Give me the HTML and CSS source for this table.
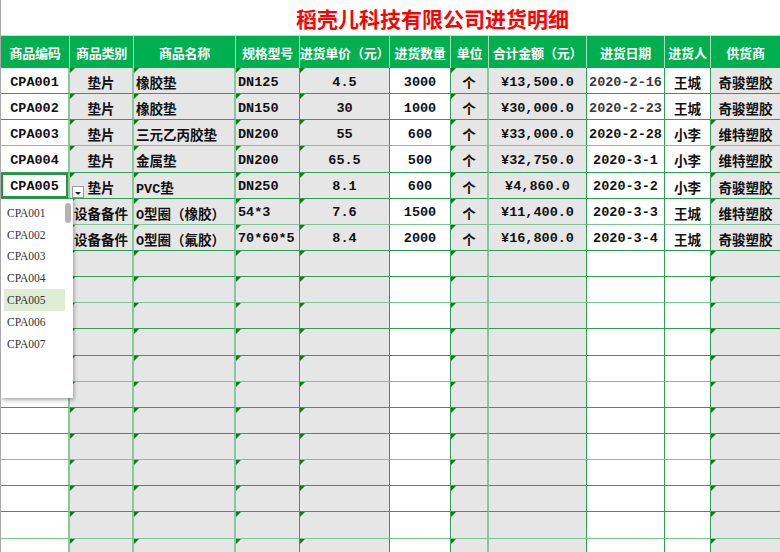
FILE: index.html
```html
<!DOCTYPE html>
<html lang="zh">
<head>
<meta charset="utf-8">
<link rel="stylesheet" href="styles.css">
</head>
<body>
<div class="sheet">
  <div class="title">稻壳儿科技有限公司进货明细</div>
  <div class="head row">
    <div>商品编码</div><div>商品类别</div><div>商品名称</div><div>规格型号</div><div>进货单价（元）</div><div>进货数量</div><div>单位</div><div>合计金额（元）</div><div>进货日期</div><div>进货人</div><div>供货商</div>
  </div>
  <div class="body">
    <div class="row">
      <div class="c w">CPA001</div><div class="c g t">垫片</div><div class="l g t">橡胶垫</div><div class="l g t">DN125</div><div class="c g t">4.5</div><div class="c w">3000</div><div class="c g t">个</div><div class="c g">¥13,500.0</div><div class="c w dim">2020-2-16</div><div class="c w">王城</div><div class="c g">奇骏塑胶</div>
    </div>
    <div class="row">
      <div class="c w">CPA002</div><div class="c g t">垫片</div><div class="l g t">橡胶垫</div><div class="l g t">DN150</div><div class="c g t">30</div><div class="c w">1000</div><div class="c g t">个</div><div class="c g">¥30,000.0</div><div class="c w dim">2020-2-23</div><div class="c w">王城</div><div class="c g">奇骏塑胶</div>
    </div>
    <div class="row">
      <div class="c w">CPA003</div><div class="c g t">垫片</div><div class="l g t">三元乙丙胶垫</div><div class="l g t">DN200</div><div class="c g t">55</div><div class="c w">600</div><div class="c g t">个</div><div class="c g">¥33,000.0</div><div class="c w">2020-2-28</div><div class="c w">小李</div><div class="c g t">维特塑胶</div>
    </div>
    <div class="row">
      <div class="c w">CPA004</div><div class="c g t">垫片</div><div class="l g t">金属垫</div><div class="l g t">DN200</div><div class="c g t">65.5</div><div class="c w">500</div><div class="c g t">个</div><div class="c g">¥32,750.0</div><div class="c w">2020-3-1</div><div class="c w">小李</div><div class="c g t">维特塑胶</div>
    </div>
    <div class="row">
      <div class="c w sel">CPA005</div><div class="c g t">垫片</div><div class="l g t">PVC垫</div><div class="l g t">DN250</div><div class="c g t">8.1</div><div class="c w">600</div><div class="c g t">个</div><div class="c g">¥4,860.0</div><div class="c w">2020-3-2</div><div class="c w">小李</div><div class="c g t">奇骏塑胶</div>
    </div>
    <div class="row">
      <div class="c w"></div><div class="c g t">设备备件</div><div class="l g t">O型圈（橡胶）</div><div class="l g t">54*3</div><div class="c g t">7.6</div><div class="c w">1500</div><div class="c g t">个</div><div class="c g">¥11,400.0</div><div class="c w">2020-3-3</div><div class="c w">王城</div><div class="c g t">维特塑胶</div>
    </div>
    <div class="row">
      <div class="c w"></div><div class="c g t">设备备件</div><div class="l g t">O型圈（氟胶）</div><div class="l g t">70*60*5</div><div class="c g t">8.4</div><div class="c w">2000</div><div class="c g t">个</div><div class="c g">¥16,800.0</div><div class="c w">2020-3-4</div><div class="c w">王城</div><div class="c g">奇骏塑胶</div>
    </div>
    <div class="row empty"><div class="w"></div><div class="g t"></div><div class="g t"></div><div class="g t"></div><div class="g t"></div><div class="w"></div><div class="g t"></div><div class="g"></div><div class="w"></div><div class="w"></div><div class="g t"></div></div>
    <div class="row empty"><div class="w"></div><div class="g t"></div><div class="g t"></div><div class="g t"></div><div class="g t"></div><div class="w"></div><div class="g t"></div><div class="g"></div><div class="w"></div><div class="w"></div><div class="g t"></div></div>
    <div class="row empty"><div class="w"></div><div class="g t"></div><div class="g t"></div><div class="g t"></div><div class="g t"></div><div class="w"></div><div class="g t"></div><div class="g"></div><div class="w"></div><div class="w"></div><div class="g t"></div></div>
    <div class="row empty"><div class="w"></div><div class="g t"></div><div class="g t"></div><div class="g t"></div><div class="g t"></div><div class="w"></div><div class="g t"></div><div class="g"></div><div class="w"></div><div class="w"></div><div class="g t"></div></div>
    <div class="row empty"><div class="w"></div><div class="g t"></div><div class="g t"></div><div class="g t"></div><div class="g t"></div><div class="w"></div><div class="g t"></div><div class="g"></div><div class="w"></div><div class="w"></div><div class="g t"></div></div>
    <div class="row empty"><div class="w"></div><div class="g t"></div><div class="g t"></div><div class="g t"></div><div class="g t"></div><div class="w"></div><div class="g t"></div><div class="g"></div><div class="w"></div><div class="w"></div><div class="g t"></div></div>
    <div class="row empty"><div class="w"></div><div class="g t"></div><div class="g t"></div><div class="g t"></div><div class="g t"></div><div class="w"></div><div class="g t"></div><div class="g"></div><div class="w"></div><div class="w"></div><div class="g t"></div></div>
    <div class="row empty"><div class="w"></div><div class="g t"></div><div class="g t"></div><div class="g t"></div><div class="g t"></div><div class="w"></div><div class="g t"></div><div class="g"></div><div class="w"></div><div class="w"></div><div class="g t"></div></div>
    <div class="row empty"><div class="w"></div><div class="g t"></div><div class="g t"></div><div class="g t"></div><div class="g t"></div><div class="w"></div><div class="g t"></div><div class="g"></div><div class="w"></div><div class="w"></div><div class="g t"></div></div>
    <div class="row empty"><div class="w"></div><div class="g t"></div><div class="g t"></div><div class="g t"></div><div class="g t"></div><div class="w"></div><div class="g t"></div><div class="g"></div><div class="w"></div><div class="w"></div><div class="g t"></div></div>
    <div class="row empty"><div class="w"></div><div class="g t"></div><div class="g t"></div><div class="g t"></div><div class="g t"></div><div class="w"></div><div class="g t"></div><div class="g"></div><div class="w"></div><div class="w"></div><div class="g t"></div></div>
    <div class="row empty"><div class="w"></div><div class="g t"></div><div class="g t"></div><div class="g t"></div><div class="g t"></div><div class="w"></div><div class="g t"></div><div class="g"></div><div class="w"></div><div class="w"></div><div class="g t"></div></div>

    <div class="dd-btn"><span class="caret"></span></div>
    <div class="dropdown">
      <div class="item">CPA001</div>
      <div class="item">CPA002</div>
      <div class="item">CPA003</div>
      <div class="item">CPA004</div>
      <div class="item on">CPA005</div>
      <div class="item">CPA006</div>
      <div class="item">CPA007</div>
      <div class="thumb"></div>
    </div>
  </div>
</div>
</body>
</html>
```

FILE: styles.css
```css
html, body {
  margin: 0;
  padding: 0;
  background: #fff;
  overflow: hidden;
}
.sheet {
  width: 780px;
  height: 552px;
  border-left: 1px solid #a9a9a9;
  box-sizing: border-box;
  overflow: hidden;
  font-family: "Liberation Mono", "Noto Sans CJK SC", monospace;
}
.title {
  height: 35px;
  box-sizing: border-box;
  padding-left: 295px;
  padding-top: 3px;
  font-family: "Noto Sans CJK SC", sans-serif;
  font-weight: 700;
  font-size: 21px;
  line-height: 30px;
  color: #ff0000;
  white-space: nowrap;
}
.row {
  display: grid;
  grid-template-columns: 69px 64px 102px 64px 90px 61px 38px 98px 78px 46px 69px;
}
.head {
  height: 33px;
  background: #00b050;
  border-top: 1px solid #b5e6c4;
  box-sizing: border-box;
}
.head > div {
  color: #fff;
  font-family: "Noto Sans CJK SC", sans-serif;
  font-weight: 700;
  font-size: 13px;
  display: flex;
  align-items: center;
  justify-content: center;
  border-right: 1px solid #a6dfb7;
  white-space: nowrap;
  letter-spacing: -0.2px;
}
.head > div:last-child { border-right: none; }
.body {
  position: relative;
}
.body .row {
  height: 26.15px;
}
.body .row > div {
  position: relative;
  box-sizing: border-box;
  padding-top: 3px;
  border-right: 1px solid #2f9e58;
  border-bottom: 1px solid #2f9e58;
  font-size: 13.5px;
  font-weight: 700;
  color: #111;
  display: flex;
  align-items: center;
  white-space: nowrap;
  overflow: hidden;
}
.body .row > div:nth-child(1),
.body .row > div:nth-child(2),
.body .row > div:nth-child(3),
.body .row > div:nth-child(7) {
  border-right-color: #83c9a0;
  border-right-width: 2px;
}
.body .row:nth-child(3n) > div {
  border-bottom-color: #7cc598;
}
.body .row > div:last-child { border-right: none; }
.w { background: #fff; }
.g { background: #e6e6e6; }
.c { justify-content: center; }
.l { justify-content: flex-start; padding-left: 2px; }
.dim { color: #3a3a3a !important; }
.t::before {
  content: "";
  position: absolute;
  left: 0;
  top: 0;
  border-top: 5px solid #0b7f14;
  border-right: 5px solid transparent;
}
.sel {
  box-shadow: inset 0 0 0 2px #2f8f46, inset 0 0 0 3px #fff;
}
.dd-btn {
  position: absolute;
  left: 71px;
  top: 118px;
  width: 12px;
  height: 12px;
  box-sizing: border-box;
  background: #fff;
  border: 1px solid #9a9a9a;
  display: flex;
  align-items: center;
  justify-content: center;
}
.caret {
  width: 0;
  height: 0;
  margin-top: 3px;
  border-left: 3px solid transparent;
  border-right: 3px solid transparent;
  border-top: 3px solid #222;
}
.dropdown {
  position: absolute;
  left: 0;
  top: 131px;
  width: 72px;
  height: 199px;
  box-sizing: border-box;
  background: #fff;
  padding-top: 3px;
  box-shadow: 1px 2px 4px rgba(0, 0, 0, 0.35);
}
.item {
  margin-left: 3px;
  width: 61px;
  height: 21.8px;
  box-sizing: border-box;
  padding-left: 3px;
  display: flex;
  align-items: center;
  font-family: "Liberation Serif", serif;
  font-size: 11.5px;
  color: #333;
}
.item.on { background: #dfecd6; }
.thumb {
  position: absolute;
  left: 64px;
  top: 4px;
  width: 6px;
  height: 20px;
  border-radius: 3px;
  background: #b4b4b4;
}
```
